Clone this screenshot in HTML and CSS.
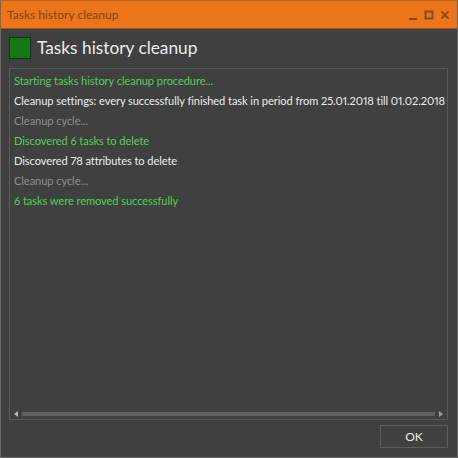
FILE: index.html
```html
<!DOCTYPE html>
<html lang="en">
<head>
    <meta charset="UTF-8">
    <title>Tasks history cleanup</title>
    <link rel="stylesheet" href="styles.css">
</head>
<body>
    <div class="window">
        <div class="titlebar">
            <div class="title">Tasks history cleanup</div>
            <div class="controls">
                <svg width="10" height="10" viewBox="0 0 10 10"><rect x="1" y="8" width="8" height="2" fill="#8a4c16"/></svg>
                <svg width="10" height="10" viewBox="0 0 10 10"><rect x="1.5" y="1.5" width="7" height="7" fill="none" stroke="#8a4c16" stroke-width="2"/></svg>
                <svg width="10" height="10" viewBox="0 0 10 10"><path d="M1.5 1.5 L8.5 8.5 M8.5 1.5 L1.5 8.5" stroke="#8a4c16" stroke-width="1.8"/></svg>
            </div>
        </div>
        <div class="header">
            <div class="status-box"></div>
            <h1>Tasks history cleanup</h1>
        </div>
        <div class="log">
            <div class="lines">
                <div class="line ok">Starting tasks history cleanup procedure...</div>
                <div class="line info">Cleanup settings: every successfully finished task in period from 25.01.2018 till 01.02.2018</div>
                <div class="line muted">Cleanup cycle...</div>
                <div class="line ok">Discovered 6 tasks to delete</div>
                <div class="line info">Discovered 78 attributes to delete</div>
                <div class="line muted">Cleanup cycle...</div>
                <div class="line ok">6 tasks were removed successfully</div>
            </div>
            <div class="hscroll">
                <span class="arrow left"></span>
                <div class="track"></div>
                <span class="arrow right"></span>
            </div>
        </div>
        <div class="footer">
            <button class="ok-button">OK</button>
        </div>
    </div>
</body>
</html>
```

FILE: styles.css
```css
html, body {
    margin: 0;
    padding: 0;
    background: #404040;
}

body {
    font-family: Lato, "Open Sans", sans-serif;
}

.window {
    width: 458px;
    height: 458px;
    box-sizing: border-box;
    border: 1px solid #6a6a6a;
    border-top-color: #b0641f;
    background: #404040;
    display: flex;
    flex-direction: column;
}

.titlebar {
    height: 27px;
    background: #ec7519;
    border-bottom: 1px solid #9c561c;
    display: flex;
    align-items: center;
    justify-content: space-between;
    padding: 0 7px 0 6px;
}

.title {
    font-size: 12px;
    color: #7e4718;
}

.controls {
    display: flex;
    gap: 6px;
    padding-top: 1px;
}

.header {
    display: flex;
    align-items: center;
    gap: 6px;
    padding: 8px 9px 0 8px;
    height: 22px;
}

.status-box {
    width: 20px;
    height: 20px;
    background: #157815;
    border: 1px solid #0c360c;
}

.header h1 {
    margin: 0;
    font-size: 17.3px;
    font-weight: normal;
    color: #ececec;
    line-height: 22px;
}

.log {
    flex: 1;
    margin: 9px 9px 0 8px;
    border: 1px solid #5a5a5a;
    display: flex;
    flex-direction: column;
    overflow: hidden;
}

.lines {
    flex: 1;
    padding: 2px 0 0 4px;
    white-space: nowrap;
}

.line {
    font-size: 11.1px;
    line-height: 20px;
    font-variant-numeric: proportional-nums;
    letter-spacing: -0.08px;
}

.ok { color: #4fd14f; }
.info { color: #ececec; }
.muted { color: #8e8e8e; }

.hscroll {
    height: 11px;
    display: flex;
    align-items: center;
    gap: 4px;
    padding: 0 4px 0 4px;
}

.track {
    flex: 1;
    height: 4px;
    background: #606060;
}

.arrow {
    width: 0;
    height: 0;
    border-top: 3px solid transparent;
    border-bottom: 3px solid transparent;
}

.arrow.left {
    border-right: 4px solid #b8b8b8;
}

.arrow.right {
    border-left: 4px solid #9a9a9a;
}

.footer {
    display: flex;
    justify-content: flex-end;
    padding: 5px 9px 9px;
}

.ok-button {
    width: 68px;
    height: 23px;
    background: #404040;
    border: 1px solid #5c5c5c;
    color: #ececec;
    font-family: Lato, "Open Sans", sans-serif;
    font-size: 12px;
    padding: 0;
}
```
